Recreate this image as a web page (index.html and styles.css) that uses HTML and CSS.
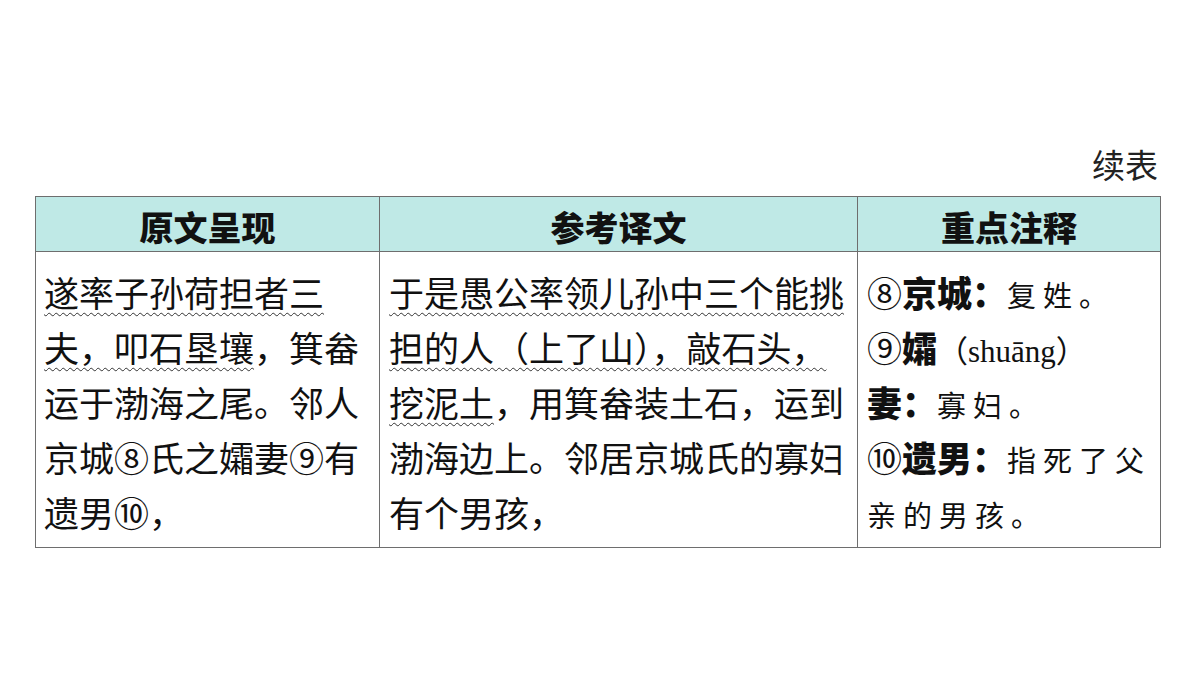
FILE: index.html
```html
<!DOCTYPE html>
<html lang="zh">
<head>
<meta charset="utf-8">
<link rel="stylesheet" href="styles.css">
</head>
<body>
<div class="page">
  <div class="caption">续表</div>
  <table class="tbl">
    <colgroup>
      <col class="c1"><col class="c2"><col class="c3">
    </colgroup>
    <thead>
      <tr><th>原文呈现</th><th>参考译文</th><th>重点注释</th></tr>
    </thead>
    <tbody>
      <tr>
        <td class="orig"><span class="wavy">遂率子孙荷担者三</span><br><span class="wavy">夫，叩石垦壤</span>，箕畚<br>运于渤海之尾。邻人<br>京城<span class="circ">⑧</span>氏之孀妻<span class="circ">⑨</span>有<br>遗男<span class="circ">⑩</span>，</td>
        <td class="trans"><span class="wavy">于是愚公率领儿孙中三个能挑</span><br><span class="wavy">担的人（上了山），敲石头，</span><br><span class="wavy">挖泥土</span>，用箕畚装土石，运到<br>渤海边上。邻居京城氏的寡妇<br>有个男孩，</td>
        <td class="notes">
          <div class="nline"><b><span class="circ">⑧</span>京城：</b><span class="kai">复姓。</span></div>
          <div class="nline"><b><span class="circ">⑨</span>孀</b><span class="py">（shuāng）</span></div>
          <div class="nline"><b>妻：</b><span class="kai">寡妇。</span></div>
          <div class="nline"><b><span class="circ">⑩</span>遗男：</b><span class="kai">指死了父</span></div>
          <div class="nline"><span class="kai">亲的男孩。</span></div>
        </td>
      </tr>
    </tbody>
  </table>
</div>
</body>
</html>
```

FILE: styles.css
```css
html, body {
  margin: 0;
  padding: 0;
  background: #ffffff;
}
.page {
  width: 1200px;
  height: 675px;
  padding: 144px 40px 0 35px;
  box-sizing: border-box;
  font-family: "Noto Sans CJK SC", "Microsoft YaHei", sans-serif;
  color: #111;
}
.caption {
  text-align: right;
  font-size: 33px;
  line-height: 40px;
  height: 52px;
  color: #222;
  padding-right: 2px;
}
.tbl {
  border-collapse: collapse;
  width: 1125px;
  table-layout: fixed;
}
.c1 { width: 344px; }
.c2 { width: 478px; }
.c3 { width: 303px; }
.tbl th, .tbl td {
  border: 1.5px solid #6e6e6e;
}
.tbl th {
  background: #bfe9e6;
  height: 55px;
  box-sizing: border-box;
  padding: 6px 0 0 0;
  font-size: 34px;
  font-weight: 900;
  line-height: 44px;
  text-align: center;
  color: #111;
}
.tbl td {
  vertical-align: top;
  font-size: 35px;
  line-height: 55px;
  padding: 12px 0 8px 8px;
  white-space: nowrap;
  text-align: left;
}
.tbl td.trans { padding-left: 9px; }
.tbl td.notes { padding-left: 9px; }
.wavy {
  text-decoration: underline wavy #333;
  text-decoration-thickness: 1px;
  text-underline-offset: 5px;
}
.circ {
  font-family: "Noto Sans CJK SC", sans-serif;
  font-weight: 400;
}
.nline {
  height: 55px;
  line-height: 55px;
  overflow: visible;
  white-space: nowrap;
}
.notes b {
  font-weight: 900;
}
.kai {
  font-size: 29px;
  letter-spacing: 7px;
  font-weight: 400;
  line-height: 1;
}
.py {
  font-family: "Liberation Serif", "Noto Sans CJK SC", serif;
  font-size: 31px;
  line-height: 1;
}
```
